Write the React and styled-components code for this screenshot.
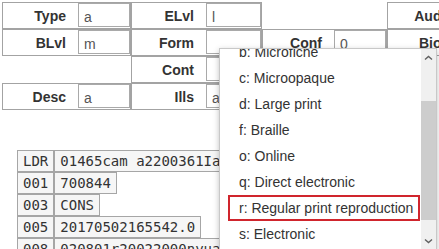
import React, { useLayoutEffect, useRef } from 'react';
import styled, { createGlobalStyle } from 'styled-components';

const GlobalStyle = createGlobalStyle`
  html, body {
    margin: 0;
    padding: 0;
    overflow: hidden;
    background: #fff;
  }
  body {
    font-family: "Liberation Sans", Arial, sans-serif;
    color: #333;
  }
`;

const Page = styled.div`
  position: relative;
  width: 439px;
  height: 249px;
  overflow: hidden;
  padding: 2px 0 0 2px;
  box-sizing: border-box;
`;

// Fixed field grid
const FixedGrid = styled.div`
  display: grid;
  grid-template-columns: 129px 131px 125px 129px;
  grid-auto-rows: 27px;
`;

const Cell = styled.div`
  display: flex;
  align-items: flex-start;
  box-sizing: border-box;
  border: 1px solid ${p => (p.$empty ? 'transparent' : '#a3a3a3')};
  height: 27px;
`;

const Label = styled.span`
  box-sizing: border-box;
  width: ${p => p.$w || 74}px;
  flex: none;
  padding: 5px 12px 0 0;
  text-align: right;
  font-weight: bold;
  font-size: 14px;
  line-height: 16px;
  color: #333;
`;

const FieldInput = styled.div`
  box-sizing: border-box;
  width: ${p => p.$w || 54}px;
  height: 24px;
  border: 1px solid #a9a9a9;
  padding: 5px 0 0 5px;
  font-size: 14px;
  line-height: 16px;
  color: #555;
`;

// MARC record table
const Record = styled.div`
  margin: 40px 0 0 15px;
  display: flex;
  flex-direction: column;
`;

const RecRow = styled.div`
  display: flex;
`;

const RecCell = styled.div`
  box-sizing: border-box;
  height: 22px;
  padding: 0 5px;
  border: 1px solid #a6a6a6;
  background: #f6f6f6;
  font-family: "DejaVu Sans Mono", monospace;
  font-size: 14px;
  line-height: 20px;
  color: #333;
  white-space: pre;
  flex: none;
`;

// Dropdown
const Dropdown = styled.div`
  position: absolute;
  left: 219px;
  top: 48px;
  width: 218px;
  height: 203px;
  box-sizing: border-box;
  border: 1px solid #c8c8c8;
  background: #fff;
  box-shadow: 0 2px 6px rgba(0, 0, 0, 0.25);
  display: flex;
`;

const OptionList = styled.ul`
  list-style: none;
  margin: 0;
  padding: 0 1px 0 8px;
  flex: 1;
  overflow: hidden;
`;

const Option = styled.li`
  box-sizing: border-box;
  height: 26px;
  padding: 0 0 0 9px;
  border: 2px solid ${p => (p.$selected ? '#d0252d' : 'transparent')};
  font-size: 14px;
  line-height: 22px;
  color: #333;
  white-space: nowrap;
`;

const Scrollbar = styled.div`
  width: 15px;
  flex: none;
  background: #f0f0f0;
  display: flex;
  flex-direction: column;
  align-items: center;
`;

const Arrow = styled.div`
  height: 18px;
  display: flex;
  align-items: center;
  justify-content: center;
`;

const Track = styled.div`
  flex: 1;
  width: 100%;
  padding: 34px 0 12px;
  box-sizing: border-box;
  display: flex;
`;

const Thumb = styled.div`
  flex: 1;
  background: #cdcdcd;
`;

const fields = [
  [['Type', 'a'], ['ELvl', 'l'], null, ['Audn', '']],
  [['BLvl', 'm'], ['Form', ''], ['Conf', '0'], ['Biog', '']],
  [null, ['Cont', ''], null, null],
  [['Desc', 'a'], ['Ills', 'a'], null, null],
];

const labelWidths = [75, 74, 71, 74];

const record = [
  ['LDR', '01465cam a2200361Ia 4500'],
  ['001', '700844'],
  ['003', 'CONS'],
  ['005', '20170502165542.0'],
  ['008', '020801r20022000nyua    e      000 1 eng d'],
];

const options = [
  ' : None of the following',
  'a: Microfilm',
  'b: Microfiche',
  'c: Microopaque',
  'd: Large print',
  'f: Braille',
  'o: Online',
  'q: Direct electronic',
  'r: Regular print reproduction',
  's: Electronic',
  '|: No attempt to code',
];

const Chevron = ({ down }) => (
  <svg width="9" height="6" viewBox="0 0 9 6">
    <path
      d={down ? 'M1 1.5 L4.5 4.5 L8 1.5' : 'M1 4.5 L4.5 1.5 L8 4.5'}
      fill="none"
      stroke="#606060"
      strokeWidth="1.4"
    />
  </svg>
);

export default function App() {
  const listRef = useRef(null);

  useLayoutEffect(() => {
    if (listRef.current) listRef.current.scrollTop = 62;
  }, []);

  return (
    <Page>
      <GlobalStyle />
      <FixedGrid>
        {fields.map((row, r) =>
          row.map((f, c) =>
            f ? (
              <Cell key={`${r}-${c}`}>
                <Label $w={labelWidths[c]}>{f[0]}</Label>
                <FieldInput $w={c === 1 ? 56 : 54}>{f[1]}</FieldInput>
              </Cell>
            ) : (
              <Cell key={`${r}-${c}`} $empty />
            )
          )
        )}
      </FixedGrid>

      <Record>
        {record.map(([tag, data]) => (
          <RecRow key={tag}>
            <RecCell>{tag}</RecCell>
            <RecCell>{data}</RecCell>
          </RecRow>
        ))}
      </Record>

      <Dropdown>
        <OptionList ref={listRef}>
          {options.map(o => (
            <Option key={o} $selected={o.startsWith('r:')}>
              {o}
            </Option>
          ))}
        </OptionList>
        <Scrollbar>
          <Arrow>
            <Chevron />
          </Arrow>
          <Track>
            <Thumb />
          </Track>
          <Arrow>
            <Chevron down />
          </Arrow>
        </Scrollbar>
      </Dropdown>
    </Page>
  );
}
